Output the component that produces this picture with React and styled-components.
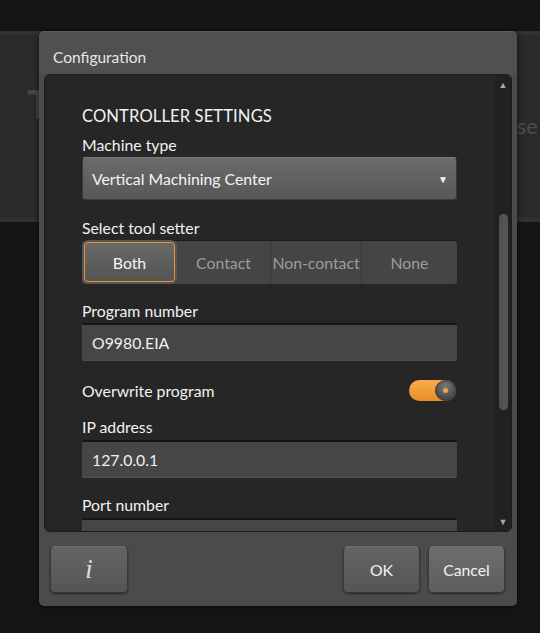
import styled, { createGlobalStyle } from "styled-components";

const GlobalStyle = createGlobalStyle`
  html, body {
    margin: 0;
    padding: 0;
    background: #151515;
  }
  body {
    width: 540px;
    height: 633px;
    overflow: hidden;
    font-family: "Lato", "Open Sans", sans-serif;
    color: #f2f2f2;
  }
`;

// what is behind the modal
const Screen = styled.div`
  position: relative;
  width: 540px;
  height: 633px;
  padding-top: 31px;
  box-sizing: border-box;
`;

const BackStrip = styled.div`
  height: 191px;
  background: #2a2a2a;
  border-top: 4px solid #333;
  border-bottom: 5px solid #313131;
  box-sizing: border-box;
  display: flex;
  justify-content: space-between;
  align-items: center;
  color: #4c4c4c;
  font-size: 22px;
  overflow: hidden;
`;

const BackGlyph = styled.span`
  margin-left: 27px;
  font-size: 40px;
  font-weight: 700;
  color: #474747;
  margin-top: -44px;
`;

const BackText = styled.span`
  margin-right: 2px;
  margin-top: -2px;
`;

const Dialog = styled.div`
  position: absolute;
  left: 39px;
  top: 31px;
  width: 478px;
  height: 575px;
  box-sizing: border-box;
  background: #4b4b4b;
  border-radius: 5px;
  border-top: 1px solid #5c5c5c;
  box-shadow: 0 0 6px rgba(0, 0, 0, 0.6);
  display: flex;
  flex-direction: column;
`;

const TitleBar = styled.div`
  height: 42px;
  box-sizing: border-box;
  padding: 15px 0 0 14px;
  font-size: 15.5px;
  line-height: 20px;
  color: #e6e6e6;
  background: #505050;
  border-radius: 5px 5px 0 0;
`;

const Pane = styled.div`
  margin: 0 5px;
  height: 458px;
  background: #262626;
  border: 1px solid #1c1c1c;
  border-radius: 6px;
  box-sizing: border-box;
  display: flex;
  overflow: hidden;
`;

const Content = styled.div`
  flex: 1;
  padding: 29px 38px 0 37px;
  overflow: hidden;
`;

const Heading = styled.div`
  font-size: 16.6px;
  line-height: 24px;
  margin-bottom: 7px;
  letter-spacing: 0.1px;
`;

const Label = styled.div`
  font-size: 15.8px;
  line-height: 20px;
  margin-bottom: ${(p) => p.$gap || 2}px;
`;

const Field = styled.div`
  margin-bottom: ${(p) => p.$after || 17}px;
`;

const Select = styled.div`
  height: 43px;
  box-sizing: border-box;
  border: 1px solid #3a3a3a;
  border-top-color: #7a7a7a;
  border-radius: 3px;
  background: linear-gradient(#6b6b6b, #575757);
  display: flex;
  align-items: center;
  justify-content: space-between;
  padding: 0 8px 0 9px;
  font-size: 15.8px;
  color: #f4f4f4;
`;

const Caret = styled.span`
  font-size: 10px;
  color: #f0f0f0;
`;

const Segmented = styled.div`
  display: grid;
  grid-template-columns: 95px 93px 91px 1fr;
  height: 44px;
  background: #454545;
  border-top: 1px solid #1a1a1a;
  border-radius: 3px;
  box-sizing: border-box;
`;

const Segment = styled.div`
  display: flex;
  align-items: center;
  justify-content: center;
  font-size: 15.8px;
  color: #9d9d9d;
  border-left: ${(p) => (p.$first ? "none" : "1px solid #383838")};
  box-sizing: border-box;
  white-space: nowrap;
`;

const ActiveSegment = styled.div`
  margin: -1px 0 0 0;
  padding: 2px;
  background: #565656;
  border-radius: 6px;
  display: flex;
`;

const ActiveInner = styled.div`
  flex: 1;
  display: flex;
  align-items: center;
  justify-content: center;
  border: 1px solid #eb922f;
  border-radius: 4px;
  background: linear-gradient(#696969, #545454);
  font-size: 15.8px;
  color: #f6f6f6;
`;

const Input = styled.div`
  height: ${(p) => p.$h || 38}px;
  box-sizing: border-box;
  background: #464646;
  border-top: 2px solid #161616;
  border-bottom: 1px solid #505050;
  border-radius: 2px;
  display: flex;
  align-items: center;
  padding-left: 10px;
  font-size: 15.8px;
  color: #f0f0f0;
`;

const ToggleRow = styled.div`
  display: flex;
  align-items: center;
  justify-content: space-between;
  height: 24px;
  margin-bottom: 15px;
  font-size: 15.8px;
`;

const Toggle = styled.div`
  width: 47px;
  height: 21px;
  border-radius: 11px;
  background: linear-gradient(#fbab4c, #e78c27);
  display: flex;
  justify-content: flex-end;
  margin-right: 1px;
`;

const Knob = styled.div`
  width: 21px;
  height: 21px;
  box-sizing: border-box;
  border-radius: 50%;
  border: 1px solid #333;
  background: radial-gradient(circle at 50% 30%, #7a7a7a, #4a4a4a 70%, #3c3c3c);
  display: flex;
  align-items: center;
  justify-content: center;
  &::after {
    content: "";
    width: 5px;
    height: 5px;
    border-radius: 50%;
    background: #f5a340;
  }
`;

const ScrollBar = styled.div`
  width: 16px;
  background: #212121;
  display: flex;
  flex-direction: column;
  align-items: center;
  padding: 5px 0 4px;
  box-sizing: border-box;
`;

const Arrow = styled.span`
  font-size: 9px;
  line-height: 10px;
  color: #a9a9a9;
`;

const Track = styled.div`
  flex: 1;
  width: 100%;
  display: flex;
  flex-direction: column;
  align-items: center;
  padding-top: 124px;
`;

const Thumb = styled.div`
  width: 9px;
  height: 196px;
  border-radius: 5px;
  background: linear-gradient(90deg, #4f4f4f, #575757);
`;

const Footer = styled.div`
  flex: 1;
  display: flex;
  align-items: center;
  padding: 0 12px 0 11px;
  gap: 8px;
`;

const Spacer = styled.div`
  flex: 1;
`;

const Button = styled.div`
  width: ${(p) => p.$w || 77}px;
  height: 47px;
  box-sizing: border-box;
  border: 1px solid #383838;
  border-top-color: #6e6e6e;
  border-radius: 5px;
  background: ${(p) =>
    p.$light
      ? "linear-gradient(#6d6d6d, #5e5e5e)"
      : "linear-gradient(#646464, #555555)"};
  box-shadow: 0 1px 2px rgba(0, 0, 0, 0.5);
  display: flex;
  align-items: center;
  justify-content: center;
  font-size: 15.8px;
  color: #f2f2f2;
`;

const InfoGlyph = styled.span`
  font-family: "Liberation Serif", "DejaVu Serif", serif;
  font-style: italic;
  font-weight: 400;
  font-size: 28px;
  color: #dcdcdc;
`;

const segments = ["Contact", "Non-contact", "None"];

export default function App() {
  return (
    <>
      <GlobalStyle />
      <Screen>
        <BackStrip>
          <BackGlyph>T</BackGlyph>
          <BackText>se</BackText>
        </BackStrip>

        <Dialog>
          <TitleBar>Configuration</TitleBar>
          <Pane>
            <Content>
              <Heading>CONTROLLER SETTINGS</Heading>

              <Label>Machine type</Label>
              <Field $after={18}>
                <Select>
                  Vertical Machining Center
                  <Caret>▼</Caret>
                </Select>
              </Field>

              <Label>Select tool setter</Label>
              <Field $after={17}>
                <Segmented>
                  <ActiveSegment>
                    <ActiveInner>Both</ActiveInner>
                  </ActiveSegment>
                  {segments.map((s, i) => (
                    <Segment key={s} $first={i === 0}>
                      {s}
                    </Segment>
                  ))}
                </Segmented>
              </Field>

              <Label>Program number</Label>
              <Field $after={17}>
                <Input>O9980.EIA</Input>
              </Field>

              <ToggleRow>
                Overwrite program
                <Toggle>
                  <Knob />
                </Toggle>
              </ToggleRow>

              <Label $gap={3}>IP address</Label>
              <Field $after={17}>
                <Input>127.0.0.1</Input>
              </Field>

              <Label $gap={3}>Port number</Label>
              <Field $after={0}>
                <Input />
              </Field>
            </Content>

            <ScrollBar>
              <Arrow>▲</Arrow>
              <Track>
                <Thumb />
              </Track>
              <Arrow>▼</Arrow>
            </ScrollBar>
          </Pane>

          <Footer>
            <Button $w={78}>
              <InfoGlyph>i</InfoGlyph>
            </Button>
            <Spacer />
            <Button>OK</Button>
            <Button $light>Cancel</Button>
          </Footer>
        </Dialog>
      </Screen>
    </>
  );
}
